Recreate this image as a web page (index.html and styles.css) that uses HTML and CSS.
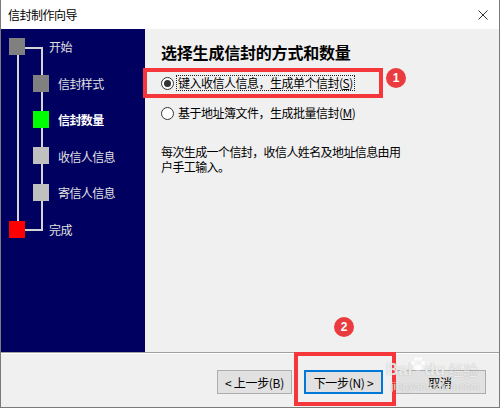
FILE: index.html
```html
<!DOCTYPE html>
<html>
<head>
  <meta charset="UTF-8" />
  <title>信封制作向导</title>
  <link rel="stylesheet" href="styles.css">
</head>
<body>
  <div class='window'>
    <header class='titlebar'>
      <span class='title'>信封制作向导</span>
      <svg class='close' width="10" height="10" viewBox="0 0 10 10">
        <path d="M0.5 0.5L9.5 9.5M9.5 0.5L0.5 9.5" stroke="#333" stroke-width="1"></path>
      </svg>
    </header>

    <main class='main'>
      <nav class='sidebar'>
        <!-- step tree: lines and boxes -->
        <svg class='tree' width="144" height="323" viewBox="0 0 144 323">
          <rect x="16" y="26" width="2" height="170" fill="#d4d4d4"></rect>
          <rect x="24" y="18" width="18" height="2" fill="#d4d4d4"></rect>
          <rect x="40" y="18" width="2" height="184" fill="#d4d4d4"></rect>
          <rect x="24" y="200" width="18" height="2" fill="#d4d4d4"></rect>
          <rect x="8" y="9" width="16" height="17" fill="#808080"></rect>
          <rect x="32" y="46" width="16" height="17" fill="#808080"></rect>
          <rect x="32" y="82" width="16" height="17" fill="#00ff00"></rect>
          <rect x="32" y="118" width="16" height="17" fill="#c0c0c0"></rect>
          <rect x="32" y="155" width="16" height="17" fill="#c0c0c0"></rect>
          <rect x="8" y="192" width="16" height="17" fill="#ff0000"></rect>
        </svg>
        <ul class='steps'>
          <li class='step end'>开始</li>
          <li class='step'>信封样式</li>
          <li class='step current'>信封数量</li>
          <li class='step'>收信人信息</li>
          <li class='step'>寄信人信息</li>
          <li class='step end'>完成</li>
        </ul>
      </nav>

      <section class='content'>
        <h1>选择生成信封的方式和数量</h1>
        <div class='options'>
          <label class='option'>
            <span class='radio checked'></span>
            <span class='optionText focused'>键入收信人信息，生成单个信封(<u>S</u>)</span>
          </label>
          <label class='option'>
            <span class='radio'></span>
            <span class='optionText'>基于地址簿文件，生成批量信封(<u>M</u>)</span>
          </label>
        </div>
        <p class='desc'>每次生成一个信封，收信人姓名及地址信息由用户手工输入。</p>
      </section>
    </main>

    <div class='separator'></div>

    <footer class='footer'>
      <button class='btn prev'>&lt; 上一步(B)</button>
      <button class='btn next'>下一步(N) &gt;</button>
      <button class='btn cancel'>取消</button>
    </footer>

    <!-- annotations drawn over the screenshot -->
    <div class='mark markOne'></div>
    <div class='badge badgeOne'>1</div>
    <div class='mark markTwo'></div>
    <div class='badge badgeTwo'>2</div>

    <div class='watermark'>
      <div class='wmLogo'>
        <span>Bai</span>
        <svg class='paw' width="16" height="14" viewBox="0 0 16 14">
          <circle cx="3" cy="6" r="2" fill="#fff"></circle>
          <circle cx="6" cy="2" r="2" fill="#fff"></circle>
          <circle cx="10" cy="2" r="2" fill="#fff"></circle>
          <circle cx="13" cy="6" r="2" fill="#fff"></circle>
          <ellipse cx="8" cy="10.5" rx="4" ry="3" fill="#fff"></ellipse>
        </svg>
        <span>du</span>
        <span class='wmCn'>经验</span>
      </div>
      <div class='wmUrl'>jingyan.baidu.com</div>
    </div>
  </div>
</body>
</html>
```

FILE: styles.css
```css
body {
  margin: 0;
  font-family: "Noto Sans CJK SC", "Liberation Sans", sans-serif;
  font-size: 12px;
  color: #000;
}

.window {
  position: relative;
  width: 500px;
  height: 408px;
  box-sizing: border-box;
  border-left: 1px solid #7a7a7a;
  border-right: 1px solid #7a7a7a;
  border-bottom: 1px solid #7a7a7a;
  display: flex;
  flex-direction: column;
  overflow: hidden;
}

.titlebar {
  height: 29px;
  background-color: #fff;
  display: flex;
  align-items: center;
  justify-content: space-between;
  padding: 0 11px 0 7px;
}

.title {
  letter-spacing: -0.5px;
}

.main {
  display: flex;
  height: 323px;
}

.sidebar {
  position: relative;
  width: 144px;
  background-color: #000060;
}

.tree {
  position: absolute;
  top: 0;
  left: 0;
}

.steps {
  position: relative;
  list-style: none;
  margin: 0;
  padding: 0;
}

.step {
  height: 36.6px;
  line-height: 36.6px;
  padding-left: 57px;
  color: #e0e0e0;
  letter-spacing: -0.6px;
}

.step.end {
  padding-left: 48px;
}

.step.current {
  color: #fff;
  font-weight: bold;
}

.content {
  flex: 1;
  background-color: #f0f0f0;
  padding: 14px 0 0 16px;
}

.content h1 {
  margin: 0;
  font-size: 16px;
  line-height: 18px;
  font-weight: bold;
  letter-spacing: -0.2px;
}

.options {
  margin-top: 12px;
  display: flex;
  flex-direction: column;
  gap: 10px;
}

.option {
  display: flex;
  align-items: center;
  height: 20px;
  gap: 2px;
}

.radio {
  width: 13px;
  height: 13px;
  box-sizing: border-box;
  border: 1px solid #333;
  border-radius: 50%;
  background-color: #fff;
  display: flex;
  align-items: center;
  justify-content: center;
}

.radio.checked::after {
  content: '';
  width: 7px;
  height: 7px;
  border-radius: 50%;
  background-color: #333;
}

.optionText {
  border: 1px dotted transparent;
  padding: 0 1px;
  line-height: 14px;
  letter-spacing: -0.5px;
}

.optionText.focused {
  border-color: #222;
}

.desc {
  margin: 21px 0 0;
  width: 245px;
  line-height: 15px;
  letter-spacing: -0.6px;
}

.separator {
  border-top: 1px solid #a0a0a0;
  border-bottom: 1px solid #fff;
}

.footer {
  flex: 1;
  background-color: #f0f0f0;
  display: flex;
  justify-content: flex-end;
  align-items: flex-start;
  padding: 16px 13px 0 0;
}

.btn {
  height: 24px;
  box-sizing: border-box;
  padding: 0;
  font-family: inherit;
  font-size: 12px;
  letter-spacing: -0.3px;
  background-color: #e1e1e1;
  border: 1px solid #adadad;
}

.prev {
  width: 75px;
}

.next {
  width: 79px;
  margin-left: 12px;
  border: 2px solid #0078d7;
}

.cancel {
  width: 92px;
  margin-left: 11px;
}

.mark {
  position: absolute;
  box-sizing: border-box;
  border: 4px solid #f5363a;
}

.markOne {
  left: 142px;
  top: 68px;
  width: 240px;
  height: 30px;
}

.markTwo {
  left: 293px;
  top: 352px;
  width: 102px;
  height: 54px;
}

.badge {
  position: absolute;
  width: 20px;
  height: 20px;
  border-radius: 50%;
  background-color: #ea3b3e;
  color: #fff;
  font-family: "Liberation Sans", sans-serif;
  font-weight: bold;
  font-size: 12px;
  display: flex;
  align-items: center;
  justify-content: center;
}

.badgeOne {
  left: 385px;
  top: 68px;
}

.badgeTwo {
  left: 333px;
  top: 317px;
}

.watermark {
  position: absolute;
  left: 385px;
  top: 357px;
  color: rgba(255, 255, 255, 0.8);
  text-shadow: 0 0 1px rgba(110, 110, 110, 0.6);
  pointer-events: none;
}

.wmLogo {
  display: flex;
  align-items: flex-end;
  font-family: "Liberation Sans", sans-serif;
  font-weight: bold;
  font-size: 17px;
  line-height: 20px;
}

.paw {
  margin: 0 -2px 9px;
  opacity: 0.85;
}

.wmCn {
  margin-left: 3px;
  font-family: "Noto Sans CJK SC", sans-serif;
  font-size: 15px;
  font-weight: normal;
}

.wmUrl {
  margin-left: 5px;
  font-family: "Liberation Sans", sans-serif;
  font-size: 11px;
  line-height: 13px;
}
```
